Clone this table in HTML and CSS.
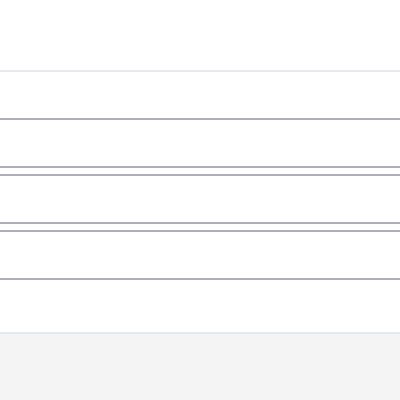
FILE: index.html
```html
<!DOCTYPE html>
<html>
<head>
<meta charset="utf-8">
<link rel="stylesheet" href="styles.css">
</head>
<body>
<div class="page">
  <div class="header"></div>
  <div class="list">
    <div class="row row-b"></div>
    <div class="row row-b"></div>
    <div class="group">
      <div class="row row-tb"></div>
    </div>
    <div class="group">
      <div class="row row-tb"></div>
    </div>
    <div class="row last"></div>
  </div>
  <div class="footer"></div>
</div>
</body>
</html>
```
FILE: styles.css
```css
html, body {
  margin: 0;
  padding: 0;
  background: #ffffff;
  font-family: "Liberation Sans", Arial, sans-serif;
}
.page {
  display: flex;
  flex-direction: column;
  height: 400px;
}
.header {
  height: 70px;
  border-bottom: 2px solid #e6eaef;
}
.list {
  display: flex;
  flex-direction: column;
}
.row {
  height: 46px;
}
.row-b {
  border-bottom: 2px solid #aeaeb9;
}
.group {
  margin-top: 6px;
}
.row-tb {
  border-top: 2px solid #aeaeb9;
  border-bottom: 2px solid #aeaeb9;
}
.row.last {
  height: 52px;
}
.footer {
  flex: 1;
  border-top: 2px solid #e3e9f0;
  background: #f4f4f5;
}
```
